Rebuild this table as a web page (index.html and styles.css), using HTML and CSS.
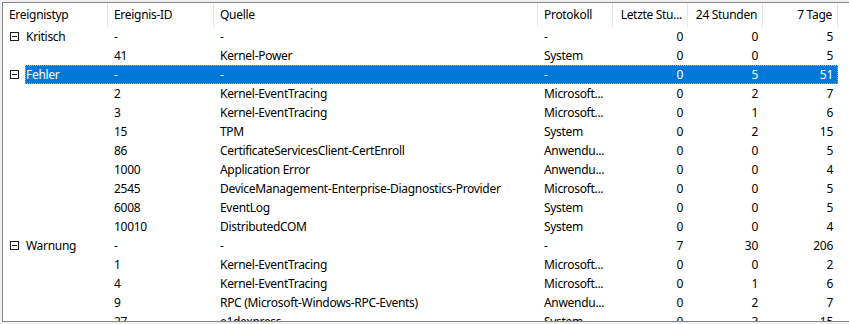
FILE: index.html
```html
<!DOCTYPE html>
<html lang="de">
<head>
    <meta charset="UTF-8">
    <title>Ereignisübersicht</title>
    <link rel="stylesheet" href="styles.css">
</head>
<body>
    <div class="list-view">
        <div class="list-header">
            <div class="col c1">Ereignistyp</div>
            <div class="col c2">Ereignis-ID</div>
            <div class="col c3">Quelle</div>
            <div class="col c4">Protokoll</div>
            <div class="col c5 num">Letzte Stu...</div>
            <div class="col c6 num">24 Stunden</div>
            <div class="col c7 num">7 Tage</div>
        </div>
        <div class="list-body" id="listBody"></div>
    </div>

    <script>
        const groups = [
            { name: 'Kritisch', counts: [0, 0, 5], items: [
                ['41', 'Kernel-Power', 'System', 0, 0, 5]
            ]},
            { name: 'Fehler', counts: [0, 5, 51], selected: true, items: [
                ['2', 'Kernel-EventTracing', 'Microsoft...', 0, 2, 7],
                ['3', 'Kernel-EventTracing', 'Microsoft...', 0, 1, 6],
                ['15', 'TPM', 'System', 0, 2, 15],
                ['86', 'CertificateServicesClient-CertEnroll', 'Anwendu...', 0, 0, 5],
                ['1000', 'Application Error', 'Anwendu...', 0, 0, 4],
                ['2545', 'DeviceManagement-Enterprise-Diagnostics-Provider', 'Microsoft...', 0, 0, 5],
                ['6008', 'EventLog', 'System', 0, 0, 5],
                ['10010', 'DistributedCOM', 'System', 0, 0, 4]
            ]},
            { name: 'Warnung', counts: [7, 30, 206], items: [
                ['1', 'Kernel-EventTracing', 'Microsoft...', 0, 0, 2],
                ['4', 'Kernel-EventTracing', 'Microsoft...', 0, 1, 6],
                ['9', 'RPC (Microsoft-Windows-RPC-Events)', 'Anwendu...', 0, 2, 7],
                ['27', 'e1dexpress', 'System', 0, 3, 15]
            ]}
        ];

        const expander = `
            <svg class="expander" width="9" height="9" viewBox="0 0 9 9">
                <rect x="0.5" y="0.5" width="8" height="8" fill="none" stroke="#1b1b1b"/>
                <line x1="2" y1="4.5" x2="7" y2="4.5" stroke="#1b1b1b"/>
            </svg>`;

        function rowHtml(first, cells, selected) {
            return `
                <div class="row">
                    <div class="gutter">${first ? expander : ''}</div>
                    <div class="row-main${selected ? ' selected' : ''}">
                        <div class="col c1">${first || ''}</div>
                        <div class="col c2">${cells[0]}</div>
                        <div class="col c3">${cells[1]}</div>
                        <div class="col c4">${cells[2]}</div>
                        <div class="col c5 num">${cells[3]}</div>
                        <div class="col c6 num">${cells[4]}</div>
                        <div class="col c7 num">${cells[5]}</div>
                    </div>
                </div>`;
        }

        const body = document.getElementById('listBody');
        let html = '';
        groups.forEach(group => {
            html += rowHtml(group.name, ['-', '-', '-', ...group.counts], group.selected);
            group.items.forEach(item => {
                html += rowHtml(null, item, false);
            });
        });
        body.innerHTML = html;
    </script>
</body>
</html>
```

FILE: styles.css
```css
* {
    margin: 0;
    padding: 0;
    box-sizing: border-box;
}

body {
    font-family: 'Segoe UI', 'Noto Sans', sans-serif;
    font-size: 12px;
    letter-spacing: -0.3px;
    color: #000;
    background: #f0f0f0;
    overflow: hidden;
}

.list-view {
    margin: 2px -20px 0 2px;
    height: 320px;
    background: #fff;
    border: 1px solid #828790;
    border-right: none;
    overflow: hidden;
}

.list-header {
    display: flex;
    height: 24px;
    line-height: 24px;
}

.list-header .col {
    border-right: 1px solid #e5e5e5;
    padding-left: 6px;
}

.list-header .c1 {
    width: 105px;
}

.list-header .num {
    padding-right: 5px;
}

.row {
    display: flex;
    height: 19px;
    line-height: 19px;
}

.gutter {
    width: 22px;
    flex-shrink: 0;
    padding: 5px 0 0 7px;
}

.expander {
    display: block;
}

.row-main {
    display: flex;
    width: 813px;
}

.row-main.selected {
    background: #0078d7;
    color: #fff;
    outline: 1px dotted #f7a14a;
    outline-offset: -1px;
}

.col {
    flex-shrink: 0;
    white-space: nowrap;
    overflow: hidden;
    padding-left: 6px;
}

.row .c1 {
    width: 83px;
    padding-left: 1px;
}

.c2 {
    width: 106px;
}

.c3 {
    width: 324px;
}

.c4 {
    width: 75px;
}

.c5,
.c6,
.c7 {
    width: 75px;
}

.num {
    text-align: right;
    padding-left: 0;
    padding-right: 5px;
}
```
